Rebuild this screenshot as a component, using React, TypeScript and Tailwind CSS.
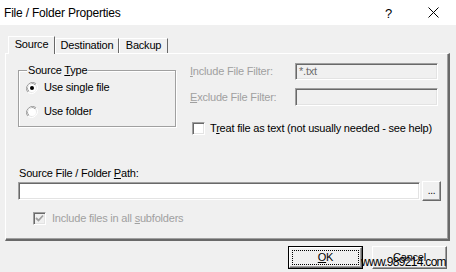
import React from "react";

const sunken =
  "border border-t-[#a0a0a0] border-l-[#a0a0a0] border-b-white border-r-white shadow-[inset_1px_1px_0_#696969,inset_-1px_-1px_0_#e3e3e3]";

function Radio({ checked }: { checked?: boolean }) {
  return (
    <svg width="12" height="12" viewBox="0 0 12 12" className="shrink-0">
      <path d="M10.2 1.8 A6 6 0 0 0 1.8 10.2" fill="none" stroke="#a0a0a0" strokeWidth="1" />
      <path d="M9.4 2.6 A5 5 0 0 0 2.6 9.4" fill="none" stroke="#696969" strokeWidth="1" />
      <path d="M1.8 10.2 A6 6 0 0 0 10.2 1.8" fill="none" stroke="#ffffff" strokeWidth="1" />
      <path d="M2.6 9.4 A5 5 0 0 0 9.4 2.6" fill="none" stroke="#e3e3e3" strokeWidth="1" />
      <circle cx="6" cy="6" r="4" fill="#ffffff" />
      {checked && <circle cx="6" cy="6" r="2" fill="#000000" />}
    </svg>
  );
}

function Check({ checked, disabled }: { checked?: boolean; disabled?: boolean }) {
  return (
    <div
      className={`w-[13px] h-[13px] shrink-0 flex items-center justify-center ${sunken} ${
        disabled ? "bg-[#f0f0f0]" : "bg-white"
      }`}
    >
      {checked && (
        <svg width="9" height="9" viewBox="0 0 9 9">
          <path d="M1 4 L3.5 6.5 L8 1.5" fill="none" stroke={disabled ? "#a0a0a0" : "#000"} strokeWidth="1.8" />
        </svg>
      )}
    </div>
  );
}

export default function App() {
  return (
    <div className="relative w-[456px] h-[272px] overflow-hidden bg-[#f0f0f0] text-black font-['Liberation_Sans',Arial,sans-serif] text-[11px] tracking-[-0.2px] leading-[13px] whitespace-nowrap">
      {/* Title bar */}
      <div className="h-[25px] bg-white flex items-center pl-[4px]">
        <span className="text-[12px] tracking-[-0.2px] mt-[1px]">File / Folder Properties</span>
        <span className="ml-auto text-[13px] mr-[36px] mt-[1px]">?</span>
        <svg width="11" height="11" viewBox="0 0 11 11" className="mr-[17px]">
          <path d="M0.5 0.5 L10.5 10.5 M10.5 0.5 L0.5 10.5" stroke="#000" strokeWidth="1" />
        </svg>
      </div>

      <div className="pl-[5px] pt-[10px]">
        {/* Tabs */}
        <div className="flex items-end h-[18px] pl-[3px] relative z-10">
          <div className="w-[47px] h-[18px] bg-[#f0f0f0] border-t border-l border-white border-r border-r-[#696969] flex items-start justify-center pt-[1px] -mb-px">
            <span>Source</span>
          </div>
          <div className="w-[64px] h-[15px] border-t border-l border-white border-r border-r-[#696969] flex items-start justify-center pt-[0px]">
            <span>Destination</span>
          </div>
          <div className="w-[49px] h-[15px] border-t border-l border-white border-r border-r-[#696969] flex items-start justify-center pt-[0px]">
            <span>Backup</span>
          </div>
        </div>

        {/* Panel */}
        <div className="w-[445px] h-[188px] border-t border-l border-white border-r-2 border-b-2 border-r-[#696969] border-b-[#696969] shadow-[inset_-1px_-1px_0_#a0a0a0]">
          <div className="flex mt-[9px]">
            {/* Group box */}
            <div className="relative ml-[12px] mt-[7px] w-[158px] h-[57px] border border-[#a0a0a0] shadow-[inset_1px_1px_0_#fff,1px_1px_0_#fff]">
              <span className="absolute left-[8px] top-[-7px] bg-[#f0f0f0] px-[1px]">
                Source <u>T</u>ype
              </span>
              <div className="flex items-center mt-[10px] ml-[7px] h-[13px]">
                <Radio checked />
                <span className="ml-[6px]">Use single file</span>
              </div>
              <div className="flex items-center mt-[11px] ml-[7px] h-[13px]">
                <Radio />
                <span className="ml-[6px]">Use folder</span>
              </div>
            </div>

            {/* Right column */}
            <div className="ml-[14px] flex flex-col">
              <div className="flex items-center h-[17px]">
                <span className="w-[105px] text-[#a0a0a0]">
                  <u>I</u>nclude File Filter:
                </span>
                <div className={`w-[143px] h-[17px] ${sunken} bg-[#f0f0f0] flex items-center pl-[3px] text-[#6d6d6d]`}>
                  *.txt
                </div>
              </div>
              <div className="flex items-center h-[18px] mt-[8px]">
                <span className="w-[105px] text-[#a0a0a0]">
                  <u>E</u>xclude File Filter:
                </span>
                <div className={`w-[143px] h-[18px] ${sunken} bg-[#f0f0f0]`} />
              </div>
              <div className="flex items-center h-[13px] mt-[16px] ml-[2px]">
                <Check />
                <span className="ml-[5px]">
                  T<u>r</u>eat file as text (not usually needed - see help)
                </span>
              </div>
            </div>
          </div>

          {/* Path */}
          <div className="ml-[13px] mt-[32px] h-[14px]">
            Source File / Folder <u>P</u>ath:
          </div>
          <div className="flex items-center h-[20px] ml-[12px]">
            <div className={`w-[402px] h-[18px] bg-white ${sunken}`} />
            <div className="ml-[2px] w-[19px] h-[20px] border border-t-white border-l-white border-b-[#696969] border-r-[#696969] shadow-[inset_-1px_-1px_0_#a0a0a0] flex items-center justify-center text-[10px] pb-[2px]">
              ...
            </div>
          </div>
          <div className="flex items-center h-[13px] mt-[11px] ml-[27px]">
            <Check checked disabled />
            <span className="ml-[6px] text-[#a0a0a0]">
              Include files in all <u>s</u>ubfolders
            </span>
          </div>
        </div>
      </div>

      {/* Buttons */}
      <div className="flex justify-end pr-[9px] mt-[5px] gap-[9px]">
        <div className="w-[75px] h-[23px] border border-black">
          <div className="w-full h-full border border-t-white border-l-white border-b-[#696969] border-r-[#696969] shadow-[inset_-1px_-1px_0_#a0a0a0] p-[2px]">
            <div className="w-full h-full border border-dotted border-black flex items-center justify-center">
              <span>
                <u>O</u>K
              </span>
            </div>
          </div>
        </div>
        <div className="w-[75px] h-[23px] border border-t-white border-l-white border-b-[#696969] border-r-[#696969] shadow-[inset_-1px_-1px_0_#a0a0a0] flex items-center justify-center">
          Cancel
        </div>
      </div>

      <span className="absolute left-[361px] top-[256px] text-[12px] tracking-[-0.7px] text-black">
        www.989214.com
      </span>
    </div>
  );
}
